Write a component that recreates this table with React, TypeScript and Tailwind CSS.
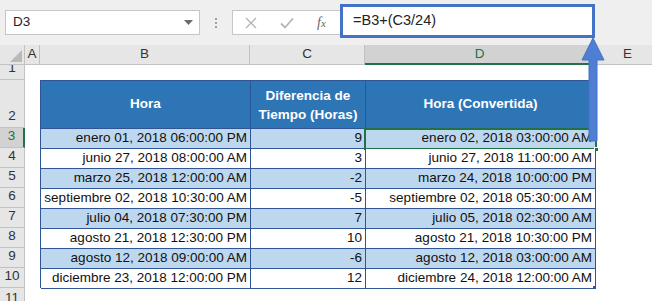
import React from 'react';

const rows = [
  { hora: 'enero 01, 2018 06:00:00 PM', dif: '9', conv: 'enero 02, 2018 03:00:00 AM' },
  { hora: 'junio 27, 2018 08:00:00 AM', dif: '3', conv: 'junio 27, 2018 11:00:00 AM' },
  { hora: 'marzo 25, 2018 12:00:00 AM', dif: '-2', conv: 'marzo 24, 2018 10:00:00 PM' },
  { hora: 'septiembre 02, 2018 10:30:00 AM', dif: '-5', conv: 'septiembre 02, 2018 05:30:00 AM' },
  { hora: 'julio 04, 2018 07:30:00 PM', dif: '7', conv: 'julio 05, 2018 02:30:00 AM' },
  { hora: 'agosto 21, 2018 12:30:00 PM', dif: '10', conv: 'agosto 21, 2018 10:30:00 PM' },
  { hora: 'agosto 12, 2018 09:00:00 AM', dif: '-6', conv: 'agosto 12, 2018 03:00:00 AM' },
  { hora: 'diciembre 23, 2018 12:00:00 PM', dif: '12', conv: 'diciembre 24, 2018 12:00:00 AM' },
];

const FormulaBar = () => (
  <div className="h-[45px] bg-[#efefef] flex items-start pt-[10px] relative">
    <div className="ml-[5px] w-[195px] h-[25px] bg-white border border-[#c6c6c6] flex items-center justify-between pl-[7px] pr-[6px] text-[13.5px] text-[#222]">
      <span>D3</span>
      <svg width="9" height="5" viewBox="0 0 9 5"><path d="M0 0h9L4.5 5z" fill="#6b6b6b" /></svg>
    </div>
    <div className="w-[32px] h-[25px] flex flex-col items-center justify-center gap-[2px]">
      <span className="w-[2px] h-[2px] bg-[#a0a0a0]" />
      <span className="w-[2px] h-[2px] bg-[#a0a0a0]" />
      <span className="w-[2px] h-[2px] bg-[#a0a0a0]" />
    </div>
    <div className="w-[108px] h-[25px] bg-white border border-[#c6c6c6] border-r-0 flex items-center">
      <svg className="ml-[12px]" width="12" height="12" viewBox="0 0 12 12"><path d="M1 1l10 10M11 1L1 11" stroke="#b5b5b5" strokeWidth="1.4" /></svg>
      <svg className="ml-[23px]" width="14" height="12" viewBox="0 0 14 12"><path d="M1 6.5l4 4L13 1.5" stroke="#b5b5b5" strokeWidth="1.8" fill="none" /></svg>
      <span className="ml-[23px] text-[14px] italic text-[#666] font-['Liberation_Serif',serif]">f<span className="text-[11px]">x</span></span>
    </div>
    <div className="mt-[-6px] w-[255px] h-[34px] bg-white border-[3px] border-[#4472c4] flex items-center pl-[10px] text-[14.5px] text-[#222]">
      =B3+(C3/24)
    </div>
  </div>
);

export default function App() {
  return (
    <div className="w-[652px] h-[301px] overflow-hidden bg-white relative font-['Liberation_Sans',Arial,sans-serif]">
      <FormulaBar />
      <div className="grid grid-cols-[25px_15px_210px_115px_230px_1fr] grid-rows-[20px_15px_48px_repeat(8,20px)_1fr] h-[256px] text-[13.5px]">
        {/* column headers */}
        <div className="bg-[#e6e6e6] border-r border-b border-[#c2c2c2] relative">
          <svg className="absolute right-[2px] bottom-[2px]" width="12" height="12" viewBox="0 0 12 12"><path d="M12 0v12H0z" fill="#b9b9b9" /></svg>
        </div>
        {['A', 'B', 'C'].map((c) => (
          <div key={c} className="bg-[#e6e6e6] border-r border-b border-[#c2c2c2] flex items-center justify-center text-[#333]">{c}</div>
        ))}
        <div className="bg-[#d2d2d2] border-r border-[#c2c2c2] border-b-2 border-b-[#217346] flex items-center justify-center text-[#217346]">D</div>
        <div className="bg-[#e6e6e6] border-b border-[#c2c2c2] flex items-center justify-start pl-[28px] text-[#333]">E</div>

        {/* row headers */}
        {Array.from({ length: 11 }, (_, i) => i + 1).map((n) => (
          <div
            key={n}
            style={{ gridRow: n + 1, gridColumn: 1 }}
            className={
              n === 3
                ? 'bg-[#d2d2d2] border-r-2 border-r-[#217346] border-b border-b-[#c2c2c2] flex items-end justify-center pb-[1px] text-[#217346]'
                : 'bg-[#e6e6e6] border-r border-b border-[#c2c2c2] flex items-end justify-center pb-[1px] text-[#333]'
            }
          >
            {n}
          </div>
        ))}

        {/* table */}
        <div className="col-start-3 col-end-6 row-start-3 row-end-12 grid grid-cols-[210px_115px_230px] grid-rows-[48px_repeat(8,20px)] border-l border-t border-[#2f5597] text-[#111]">
          <div className="bg-[#2e75b6] border-r border-b border-[#2f5597] flex items-center justify-center text-white font-bold">Hora</div>
          <div className="bg-[#2e75b6] border-r border-b border-[#2f5597] flex items-center justify-center text-center text-white font-bold leading-[19px]">Diferencia de<br />Tiempo (Horas)</div>
          <div className="bg-[#2e75b6] border-r border-b border-[#2f5597] flex items-center justify-center text-white font-bold">Hora (Convertida)</div>
          {rows.map((r, i) => {
            const bg = i % 2 === 0 ? 'bg-[#bdd7ee]' : 'bg-white';
            return (
              <React.Fragment key={i}>
                <div className={`${bg} border-r border-b border-[#2f5597] flex items-center justify-end pr-[3px]`}>{r.hora}</div>
                <div className={`${bg} border-r border-b border-[#2f5597] flex items-center justify-end pr-[3px]`}>{r.dif}</div>
                <div className={`${bg} border-r border-b border-[#2f5597] flex items-center justify-end pr-[3px] relative`}>
                  {r.conv}
                  {i === 0 && (
                    <>
                      <div className="absolute left-[-2px] top-[-1px] right-[-2px] bottom-[-2px] border-2 border-[#217346]" />
                      <div className="absolute right-[-4px] bottom-[-4px] w-[5px] h-[5px] bg-[#217346] border border-white" />
                    </>
                  )}
                  {i === 7 && <div className="absolute right-[-1px] bottom-[-1px] w-[3px] h-[3px] bg-[#2f5597]" />}
                </div>
              </React.Fragment>
            );
          })}
        </div>
      </div>

      {/* arrow pointing to formula */}
      <svg className="absolute left-[581px] top-[38px]" width="24" height="104" viewBox="0 0 24 104">
        <path d="M12 0L23 22H16V103H8V22H1z" fill="#4f7fd2" stroke="#4472c4" strokeWidth="1" />
      </svg>
    </div>
  );
}
